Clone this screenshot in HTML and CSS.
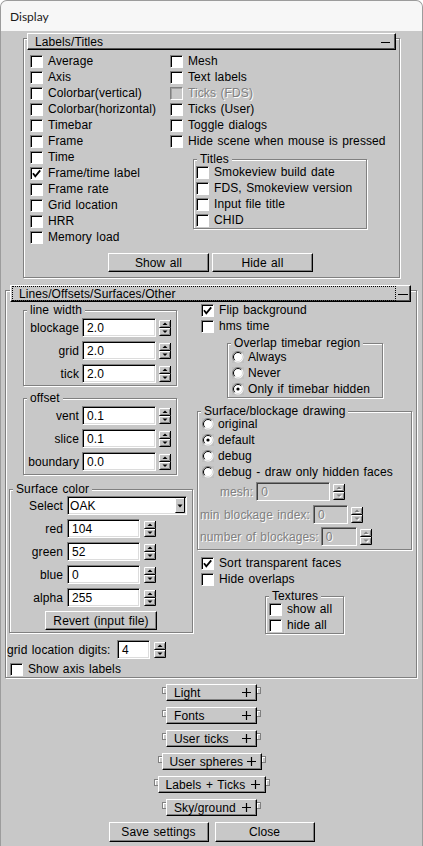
FILE: index.html
```html
<!DOCTYPE html>
<html>
<head>
<meta charset="utf-8">
<title>Display</title>
<link rel="stylesheet" href="styles.css">
</head>
<body>
<svg class="defs" width="0" height="0" aria-hidden="true">
  <defs>
    <symbol id="chk" viewBox="0 0 11 11"><path d="M2 5.3L4.3 8.3L9.2 2.4" fill="none" stroke="#000" stroke-width="1.8"/></symbol>
    <symbol id="rad" viewBox="0 0 12 12">
      <rect width="12" height="12" fill="#c0c0c0"/>
      <circle cx="6" cy="6" r="5.5" fill="#fff"/>
      <path d="M2.1 9.9A5.5 5.5 0 0 1 9.9 2.1" fill="none" stroke="#808080"/>
      <path d="M2.8 9.2A4.5 4.5 0 0 1 9.2 2.8" fill="none" stroke="#000"/>
      <path d="M9.2 2.8A4.5 4.5 0 0 1 2.8 9.2" fill="none" stroke="#dcdcdc"/>
    </symbol>
    <symbol id="spn" viewBox="0 0 12 16">
      <rect width="12" height="16" fill="#c8c8c8"/>
      <path d="M.5 7V.5H11" fill="none" stroke="#fff"/>
      <path d="M.5 7.5H11.5V0" fill="none" stroke="#000"/>
      <path d="M1.5 6.5H10.5V1.5" fill="none" stroke="#808080"/>
      <path d="M.5 15V8.5H11" fill="none" stroke="#fff"/>
      <path d="M.5 15.5H11.5V8" fill="none" stroke="#000"/>
      <path d="M1.5 14.5H10.5V9.5" fill="none" stroke="#808080"/>
      <path d="M3.5 5L6 2.5L8.5 5Z" fill="#000"/>
      <path d="M3.5 10.5L6 13L8.5 10.5Z" fill="#000"/>
    </symbol>
    <symbol id="spnd" viewBox="0 0 12 16">
      <rect width="12" height="16" fill="#c8c8c8"/>
      <path d="M.5 7V.5H11" fill="none" stroke="#fff"/>
      <path d="M.5 7.5H11.5V0" fill="none" stroke="#000"/>
      <path d="M1.5 6.5H10.5V1.5" fill="none" stroke="#808080"/>
      <path d="M.5 15V8.5H11" fill="none" stroke="#fff"/>
      <path d="M.5 15.5H11.5V8" fill="none" stroke="#000"/>
      <path d="M1.5 14.5H10.5V9.5" fill="none" stroke="#808080"/>
      <path d="M4.5 6L7 3.5L9.5 6Z" fill="#fff"/>
      <path d="M3.5 5L6 2.5L8.5 5Z" fill="#808080"/>
      <path d="M4.5 11.5L7 14L9.5 11.5Z" fill="#fff"/>
      <path d="M3.5 10.5L6 13L8.5 10.5Z" fill="#808080"/>
    </symbol>
    <symbol id="dd" viewBox="0 0 10 15">
      <rect width="10" height="15" fill="#c8c8c8"/>
      <path d="M.5 14V.5H9" fill="none" stroke="#fff"/>
      <path d="M.5 14.5H9.5V0" fill="none" stroke="#000"/>
      <path d="M2.5 6.5H7.5L5 9.5Z" fill="#000"/>
    </symbol>
    <symbol id="pls" viewBox="0 0 9 9"><path d="M0 4.5H9M4.5 0V9" fill="none" stroke="#000" stroke-width="1.2"/></symbol>
  </defs>
</svg>

<div class="win">
  <div class="titlebar">Display</div>

  <div class="frame ro1">
    <div class="rohead">
      <span>Labels/Titles</span><i class="dash"></i>
    </div>
    <div class="ltgrid">
      <div class="col1">
        <div class="cb"><span class="box"></span>Average</div>
        <div class="cb"><span class="box"></span>Axis</div>
        <div class="cb"><span class="box"></span>Colorbar(vertical)</div>
        <div class="cb"><span class="box"></span>Colorbar(horizontal)</div>
        <div class="cb"><span class="box"></span>Timebar</div>
        <div class="cb"><span class="box"></span>Frame</div>
        <div class="cb"><span class="box"></span>Time</div>
        <div class="cb"><span class="box"><svg><use href="#chk"/></svg></span>Frame/time label</div>
        <div class="cb"><span class="box"></span>Frame rate</div>
        <div class="cb"><span class="box"></span>Grid location</div>
        <div class="cb"><span class="box"></span>HRR</div>
        <div class="cb"><span class="box"></span>Memory load</div>
      </div>
      <div class="col2">
        <div class="cb"><span class="box"></span>Mesh</div>
        <div class="cb"><span class="box"></span>Text labels</div>
        <div class="cb"><span class="box dis"></span><span class="dis-t">Ticks (FDS)</span></div>
        <div class="cb"><span class="box"></span>Ticks (User)</div>
        <div class="cb"><span class="box"></span>Toggle dialogs</div>
        <div class="cb"><span class="box"></span>Hide scene when mouse is pressed</div>
        <div class="frame titles">
          <span class="legend">Titles</span>
          <div class="cb"><span class="box"></span>Smokeview build date</div>
          <div class="cb"><span class="box"></span>FDS, Smokeview version</div>
          <div class="cb"><span class="box"></span>Input file title</div>
          <div class="cb"><span class="box"></span>CHID</div>
        </div>
      </div>
    </div>
    <div class="btnrow">
      <div class="btn w101">Show all</div>
      <div class="btn w101">Hide all</div>
    </div>
  </div>

  <div class="frame ro2">
    <div class="rohead">
      <span class="focus">Lines/Offsets/Surfaces/Other</span><i class="dash"></i>
    </div>
    <div class="lobody">
      <div class="lcol">
        <div class="frame pnl pnl-lw">
          <span class="legend">line width</span>
          <div class="fld"><span class="lbl55">blockage</span><span class="inp w74">2.0</span><svg class="spin"><use href="#spn"/></svg></div>
          <div class="fld"><span class="lbl55">grid</span><span class="inp w74">2.0</span><svg class="spin"><use href="#spn"/></svg></div>
          <div class="fld"><span class="lbl55">tick</span><span class="inp w74">2.0</span><svg class="spin"><use href="#spn"/></svg></div>
        </div>
        <div class="frame pnl pnl-off">
          <span class="legend">offset</span>
          <div class="fld"><span class="lbl55">vent</span><span class="inp w74">0.1</span><svg class="spin"><use href="#spn"/></svg></div>
          <div class="fld"><span class="lbl55">slice</span><span class="inp w74">0.1</span><svg class="spin"><use href="#spn"/></svg></div>
          <div class="fld"><span class="lbl55">boundary</span><span class="inp w74">0.0</span><svg class="spin"><use href="#spn"/></svg></div>
        </div>
        <div class="frame pnl pnl-surf">
          <span class="legend">Surface color</span>
          <div class="fld"><span class="lbl53">Select</span><span class="inp sel">OAK<svg class="ddarrow"><use href="#dd"/></svg></span></div>
          <div class="fld"><span class="lbl53">red</span><span class="inp w73">104</span><svg class="spin sp4"><use href="#spn"/></svg></div>
          <div class="fld"><span class="lbl53">green</span><span class="inp w73">52</span><svg class="spin sp4"><use href="#spn"/></svg></div>
          <div class="fld"><span class="lbl53">blue</span><span class="inp w73">0</span><svg class="spin sp4"><use href="#spn"/></svg></div>
          <div class="fld"><span class="lbl53">alpha</span><span class="inp w73">255</span><svg class="spin sp4"><use href="#spn"/></svg></div>
          <div class="btn w112">Revert (input file)</div>
        </div>
        <div class="fld gld"><span class="lbl-gld">grid location digits:</span><span class="inp w33">4</span><svg class="spin sp4"><use href="#spn"/></svg></div>
        <div class="cb axis"><span class="box"></span>Show axis labels</div>
      </div>

      <div class="rcol">
        <div class="cb pl4"><span class="box"><svg><use href="#chk"/></svg></span>Flip background</div>
        <div class="cb pl4"><span class="box"></span>hms time</div>
        <div class="frame pnl-ovl">
          <span class="legend">Overlap timebar region</span>
          <div class="rb"><svg class="radio"><use href="#rad"/></svg>Always</div>
          <div class="rb"><svg class="radio"><use href="#rad"/></svg>Never</div>
          <div class="rb"><svg class="radio" viewBox="0 0 12 12"><use href="#rad"/><circle cx="6" cy="6" r="1.6" fill="#000"/></svg>Only if timebar hidden</div>
        </div>
        <div class="frame pnl-sb">
          <span class="legend">Surface/blockage drawing</span>
          <div class="rb"><svg class="radio"><use href="#rad"/></svg>original</div>
          <div class="rb"><svg class="radio" viewBox="0 0 12 12"><use href="#rad"/><circle cx="6" cy="6" r="1.6" fill="#000"/></svg>default</div>
          <div class="rb"><svg class="radio"><use href="#rad"/></svg>debug</div>
          <div class="rb"><svg class="radio"><use href="#rad"/></svg>debug - draw only hidden faces</div>
          <div class="fld mesh"><span class="dis-t">mesh:</span><span class="inp dis w74 ml3">0</span><svg class="spin"><use href="#spnd"/></svg></div>
          <div class="fld minb"><span class="dis-t">min blockage index:</span><span class="inp dis w35 ml3">0</span><svg class="spin"><use href="#spnd"/></svg></div>
          <div class="fld numb"><span class="dis-t">number of blockages:</span><span class="inp dis w36 ml2">0</span><svg class="spin"><use href="#spnd"/></svg></div>
        </div>
        <div class="cb pl4 sort"><span class="box"><svg><use href="#chk"/></svg></span>Sort transparent faces</div>
        <div class="cb pl4"><span class="box"></span>Hide overlaps</div>
        <div class="frame pnl-tex">
          <span class="legend">Textures</span>
          <div class="cb"><span class="box"></span>show all</div>
          <div class="cb"><span class="box"></span>hide all</div>
        </div>
      </div>
    </div>
  </div>

  <div class="closed">
    <div class="crow"><i class="hdl hl"></i><div class="cbtn w91"><span>Light</span><svg class="plus"><use href="#pls"/></svg></div><i class="hdl hr"></i></div>
    <div class="crow"><i class="hdl hl"></i><div class="cbtn w91"><span>Fonts</span><svg class="plus"><use href="#pls"/></svg></div><i class="hdl hr"></i></div>
    <div class="crow"><i class="hdl hl"></i><div class="cbtn w91"><span>User ticks</span><svg class="plus"><use href="#pls"/></svg></div><i class="hdl hr"></i></div>
    <div class="crow"><i class="hdl hl"></i><div class="cbtn w100"><span>User spheres</span><svg class="plus"><use href="#pls"/></svg></div><i class="hdl hr"></i></div>
    <div class="crow"><i class="hdl hl"></i><div class="cbtn w108"><span>Labels + Ticks</span><svg class="plus"><use href="#pls"/></svg></div><i class="hdl hr"></i></div>
    <div class="crow"><i class="hdl hl"></i><div class="cbtn w91"><span>Sky/ground</span><svg class="plus"><use href="#pls"/></svg></div><i class="hdl hr"></i></div>
    <div class="btmrow">
      <div class="btn big">Save settings</div>
      <div class="btn big">Close</div>
    </div>
  </div>
</div>
</body>
</html>
```

FILE: styles.css
```css
* { box-sizing: border-box; }
html, body { margin: 0; padding: 0; }
body {
  width: 423px;
  height: 846px;
  overflow: hidden;
  background: #ffffff;
  font-family: "Liberation Sans", Arial, Helvetica, sans-serif;
  font-size: 12px;
  letter-spacing: 0.1px;
  word-spacing: 1px;
  color: #000;
}
.defs { position: absolute; width: 0; height: 0; overflow: hidden; }

.win {
  height: 846px;
  border: 1px solid #9c9c9c;
  border-bottom: 0;
  border-radius: 7px 7px 0 0;
  overflow: hidden;
  background: #c8c8c8;
  display: flex;
  flex-direction: column;
}
.titlebar {
  flex: 0 0 30px;
  background: #f7f7f7;
  display: flex;
  align-items: center;
  padding-left: 9px;
  font-family: Lato, "Noto Sans", sans-serif;
  font-size: 12px;
  letter-spacing: 0;
  word-spacing: 0;
  color: #1a1a1a;
}

/* etched frames */
.frame {
  position: relative;
  border: 1px solid #808080;
  box-shadow: inset 1px 1px 0 #fff, 1px 1px 0 #fff;
  flex: none;
}
.legend {
  position: absolute;
  top: -8px;
  left: 3px;
  padding: 0 3px;
  background: #c8c8c8;
  line-height: 14px;
  white-space: nowrap;
}

/* rollout header bars */
.rohead {
  height: 17px;
  margin-top: -6px;
  border: 1px solid;
  border-color: #fff #000 #000 #fff;
  box-shadow: inset -1px -1px 0 #555;
  background: #c8c8c8;
  display: flex;
  align-items: center;
  white-space: nowrap;
}
.dash { display: block; height: 1px; background: #000; margin-top: 2px; }

.ro1 { margin: 7px 0 0 22px; width: 377px; padding-bottom: 5px; }
.ro1 .rohead { margin: -6px 3px 0 3px; padding: 0 5px 0 7px; justify-content: space-between; }
.ro1 .dash { width: 9px; }

.ro2 { margin: 12px 0 0 4px; width: 412px; }
.ro2 .rohead { margin: -6px 5px 0 4px; }
.focus {
  flex: 1;
  align-self: stretch;
  margin-left: 1px;
  border: 1px dotted #000;
  padding-left: 6px;
  display: flex;
  align-items: center;
}
.ro2 .dash { width: 10px; margin-left: 2px; margin-right: 2px; }

/* checkboxes */
.cb { display: flex; align-items: center; height: 16px; gap: 5px; white-space: nowrap; }
.box {
  width: 13px;
  height: 13px;
  flex: none;
  background: #fff;
  border: 1px solid;
  border-color: #808080 #fff #fff #808080;
  box-shadow: inset 1px 1px 0 #000;
  display: flex;
  align-items: center;
  justify-content: center;
}
.box svg { width: 11px; height: 11px; }
.box.dis { background: #c8c8c8; box-shadow: inset 1px 1px 0 #a0a0a0; }
.dis-t { color: #808080; text-shadow: 1px 1px 0 #fff; }

/* radios */
.rb { display: flex; align-items: center; height: 16px; gap: 4px; white-space: nowrap; }
.radio { width: 12px; height: 12px; flex: none; }

/* labels/titles grid */
.ltgrid { display: flex; margin-top: 3px; padding-left: 6px; }
.col1 { width: 140px; flex: none; }
.col2 { flex: none; }
.titles { margin: 10px 0 0 23px; width: 174px; padding: 4px 0 0 2px; }

/* buttons */
.btnrow { display: flex; justify-content: center; gap: 3px; margin-top: 8px; padding-right: 2px; }
.btn {
  height: 19px;
  border: 1px solid;
  border-color: #fff #000 #000 #fff;
  box-shadow: inset -1px -1px 0 #808080;
  background: #c8c8c8;
  display: flex;
  align-items: center;
  justify-content: center;
  white-space: nowrap;
  flex: none;
}
.w101 { width: 101px; }
.w112 { width: 112px; align-self: center; }
.big { width: 100px; height: 20px; }

/* fields */
.fld { display: flex; align-items: center; height: 19px; white-space: nowrap; flex: none; }
.inp {
  height: 19px;
  background: #fff;
  border: 1px solid;
  border-color: #808080 #fff #fff #808080;
  box-shadow: inset 1px 1px 0 #000, inset -1px -1px 0 #dcdcdc;
  padding-left: 4px;
  display: flex;
  align-items: center;
  flex: none;
}
.inp.dis {
  background: #c8c8c8;
  color: #808080;
  text-shadow: 1px 1px 0 #fff;
  box-shadow: inset 1px 1px 0 #404040;
}
.w74 { width: 74px; }
.w73 { width: 73px; }
.w33 { width: 33px; }
.w35 { width: 35px; }
.w36 { width: 36px; }
.ml3 { margin-left: 3px; }
.ml2 { margin-left: 2px; }
.spin { width: 12px; height: 16px; margin-left: 3px; flex: none; }
.spin.sp4 { margin-left: 4px; }
.lbl55 { width: 55px; text-align: right; margin-right: 3px; flex: none; }
.lbl53 { width: 53px; text-align: right; margin-right: 4px; flex: none; }
.sel { width: 120px; justify-content: space-between; padding-left: 2px; padding-right: 1px; }
.ddarrow { width: 10px; height: 15px; flex: none; }

/* lines/offsets body */
.lobody { display: flex; gap: 4px; padding-left: 1px; }
.lcol { width: 186px; flex: none; display: flex; flex-direction: column; }
.rcol { width: 215px; flex: none; display: flex; flex-direction: column; }
.pnl { display: flex; flex-direction: column; gap: 4px; }
.pnl-lw { margin: 8px 0 0 16px; width: 154px; padding: 7px 0 2px; }
.pnl-off { margin: 12px 0 0 16px; width: 154px; padding: 7px 0 3px; }
.pnl-surf { margin: 14px 0 0 2px; width: 184px; padding: 6px 0 2px; }
.gld { margin-top: 7px; }
.lbl-gld { width: 107px; margin-right: 3px; flex: none; }
.axis { margin-top: 2px; padding-left: 3px; }

.pl4 { padding-left: 4px; }
.pnl-ovl { margin: 9px 0 0 30px; width: 156px; padding: 5px 0 0 4px; }
.pnl-sb { margin-top: 13px; width: 215px; padding: 4px 0 3px 4px; }
.mesh { margin-top: 2px; padding-left: 18px; }
.minb { margin-top: 4px; margin-left: -2px; }
.numb { margin-top: 3px; margin-left: -2px; }
.sort { margin-top: 5px; }
.pnl-tex { margin: 9px 0 0 68px; width: 79px; padding: 4px 0 0 3px; }

/* closed rollouts */
.closed { display: flex; flex-direction: column; align-items: center; gap: 6px; margin-top: 6px; }
.crow { display: flex; height: 17px; }
.hdl {
  display: block;
  width: 4px;
  height: 7px;
  margin-top: 3px;
  border: 1px solid #808080;
  box-shadow: inset 1px 1px 0 #fff;
}
.hl { border-right: 0; }
.hr { border-left: 0; }
.cbtn {
  height: 17px;
  border: 1px solid;
  border-color: #fff #000 #000 #fff;
  box-shadow: inset -1px -1px 0 #808080;
  display: flex;
  align-items: center;
  justify-content: space-between;
  padding: 0 5px 0 7px;
  white-space: nowrap;
}
.w91 { width: 91px; }
.w100 { width: 100px; }
.w108 { width: 108px; }
.plus { width: 9px; height: 9px; flex: none; }
.btmrow { display: flex; justify-content: center; gap: 6px; }
```
